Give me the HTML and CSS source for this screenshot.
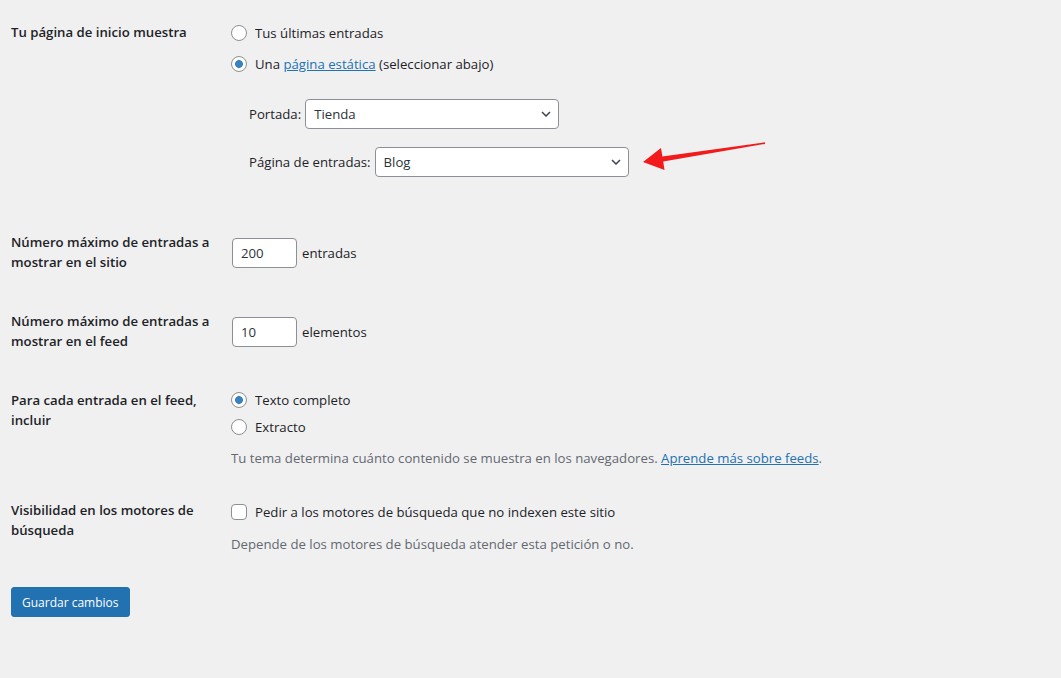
FILE: index.html
```html
<!DOCTYPE html>
<html lang="es">
<head>
    <meta charset="UTF-8">
    <title>Ajustes de lectura</title>
    <link rel="stylesheet" href="styles.css">
</head>
<body>
    <div class="wrap">
        <form>
            <table class="form-table">
                <tr>
                    <th>Tu página de inicio muestra</th>
                    <td>
                        <label class="choice first"><input type="radio" name="show_on_front">Tus últimas entradas</label>
                        <label class="choice second"><input type="radio" name="show_on_front" checked>Una&nbsp;<a href="#">página estática</a>&nbsp;(seleccionar abajo)</label>
                        <ul class="front-pages">
                            <li>
                                <label>Portada:</label>
                                <span class="select-wrap">
                                    <select><option>Tienda</option></select>
                                    <svg class="chevron" width="10" height="6" viewBox="0 0 10 6"><path d="M1 1l4 4 4-4" fill="none" stroke="#3c434a" stroke-width="1.5"/></svg>
                                </span>
                            </li>
                            <li class="posts-page">
                                <label>Página de entradas:</label>
                                <span class="select-wrap">
                                    <select><option>Blog</option></select>
                                    <svg class="chevron" width="10" height="6" viewBox="0 0 10 6"><path d="M1 1l4 4 4-4" fill="none" stroke="#3c434a" stroke-width="1.5"/></svg>
                                </span>
                                <!-- annotation arrow -->
                                <svg class="arrow" width="132" height="40" viewBox="0 0 132 40">
                                    <polygon points="6,25 24,11 25.4,19.4 128,5.3 128,6.9 26.2,24.4 27.5,33" fill="#f21a1a"/>
                                </svg>
                            </li>
                        </ul>
                    </td>
                </tr>
                <tr>
                    <th>Número máximo de entradas a mostrar en el sitio</th>
                    <td>
                        <div class="number-row"><input type="text" value="200"> entradas</div>
                    </td>
                </tr>
                <tr>
                    <th>Número máximo de entradas a mostrar en el feed</th>
                    <td>
                        <div class="number-row"><input type="text" value="10"> elementos</div>
                    </td>
                </tr>
                <tr>
                    <th>Para cada entrada en el feed, incluir</th>
                    <td class="feed-cell">
                        <label class="choice feed-first"><input type="radio" name="rss_use_excerpt" checked>Texto completo</label>
                        <label class="choice feed-second"><input type="radio" name="rss_use_excerpt">Extracto</label>
                        <p class="description">Tu tema determina cuánto contenido se muestra en los navegadores. <a href="#">Aprende más sobre feeds</a>.</p>
                    </td>
                </tr>
                <tr>
                    <th>Visibilidad en los motores de búsqueda</th>
                    <td>
                        <label class="choice check"><input type="checkbox">Pedir a los motores de búsqueda que no indexen este sitio</label>
                        <p class="description search-note">Depende de los motores de búsqueda atender esta petición o no.</p>
                    </td>
                </tr>
            </table>
            <p class="submit"><button type="button" class="button-primary">Guardar cambios</button></p>
        </form>
    </div>
</body>
</html>
```

FILE: styles.css
```css
/* Basic Styles */
body {
    background-color: #f0f0f1;
    color: #1d2327;
    font-family: "Open Sans", "Noto Sans", sans-serif;
    font-size: 13.2px;
    line-height: 20px;
    margin: 0;
    padding: 0;
}

.wrap {
    padding: 3px 11px 0;
}

a {
    color: #2271b1;
    text-decoration: underline;
}

/* Form table */
.form-table {
    border-collapse: collapse;
    border-spacing: 0;
}

.form-table th {
    width: 200px;
    padding: 20px 10px 20px 0;
    text-align: left;
    vertical-align: top;
    font-weight: 600;
    line-height: 19.5px;
}

.form-table td {
    padding: 15px 10px;
    vertical-align: top;
}

.form-table td.feed-cell {
    padding-bottom: 13px;
}

/* Radios and checkboxes */
.choice {
    display: flex;
    align-items: center;
    white-space: nowrap;
}

.choice.first { margin-top: 5px; }
.choice.second { margin-top: 11px; }
.choice.feed-first { margin-top: 4px; }
.choice.feed-second { margin-top: 7px; }
.choice.check { margin-top: 6px; }

input[type="radio"],
input[type="checkbox"] {
    appearance: none;
    -webkit-appearance: none;
    width: 16px;
    height: 16px;
    margin: 0 8px 0 0;
    border: 1px solid #8c8f94;
    background: #fff;
    flex-shrink: 0;
}

input[type="radio"] {
    border-radius: 50%;
}

input[type="radio"]:checked {
    background: radial-gradient(circle, #3582c4 0 3.6px, #fff 4.2px);
}

input[type="checkbox"] {
    border-radius: 4px;
}

/* Static page selects */
.front-pages {
    list-style: none;
    margin: 25px 0 21px;
    padding: 0 0 0 18px;
}

.front-pages li {
    display: flex;
    align-items: center;
    gap: 4px;
}

.front-pages li + li {
    margin-top: 18px;
}

.posts-page {
    position: relative;
}

.select-wrap {
    position: relative;
    display: inline-block;
}

select {
    appearance: none;
    -webkit-appearance: none;
    width: 254px;
    height: 30px;
    padding: 0 24px 0 8px;
    border: 1px solid #8c8f94;
    border-radius: 4px;
    background: #fff;
    color: #2c3338;
    font-family: inherit;
    font-size: 13.2px;
    display: block;
}

.chevron {
    position: absolute;
    right: 8px;
    top: 12px;
    pointer-events: none;
}

.arrow {
    position: absolute;
    left: 388px;
    top: -10px;
}

/* Number inputs */
.number-row {
    display: flex;
    align-items: center;
    gap: 5px;
    margin-top: 10px;
}

.number-row input {
    width: 65px;
    height: 30px;
    margin-left: 1px;
    box-sizing: border-box;
    padding: 0 8px;
    border: 1px solid #8c8f94;
    border-radius: 4px;
    background: #fff;
    color: #2c3338;
    font-family: inherit;
    font-size: 13.2px;
}

.description {
    color: #646970;
    margin: 11px 0 0;
    white-space: nowrap;
}

.description.search-note {
    margin-top: 12px;
}

/* Submit */
.submit {
    margin: 18px 0 0;
    padding: 0;
}

.button-primary {
    height: 30px;
    padding: 0 10px;
    background: #2271b1;
    border: 1px solid #2271b1;
    border-radius: 3px;
    color: #fff;
    font-family: inherit;
    font-size: 12px;
    cursor: pointer;
}
```
